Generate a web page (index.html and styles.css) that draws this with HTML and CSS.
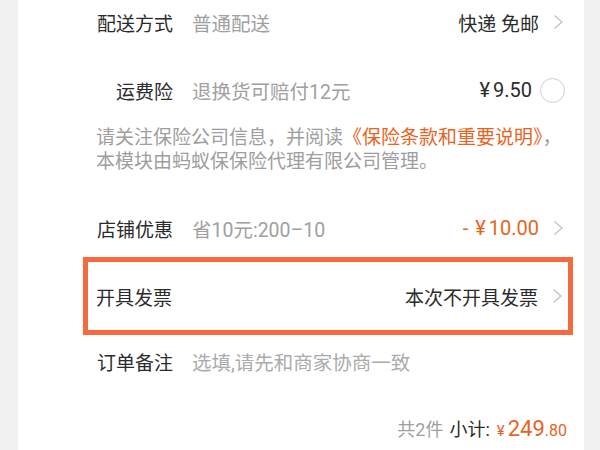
FILE: index.html
```html
<!DOCTYPE html>
<html lang="zh-CN">
<head>
  <meta charset="UTF-8">
  <meta name="viewport" content="width=device-width, initial-scale=1.0">
  <title>确认订单</title>
  <link rel="stylesheet" href="styles.css">
</head>
<body>
  <div class="card">
    <!-- 配送 -->
    <div class="row row-delivery">
      <span class="label">配送方式</span>
      <span class="value">普通配送</span>
      <span class="right">快递 免邮</span>
      <svg class="chevron" width="11" height="16" viewBox="0 0 11 16"><path d="M1.5 1.5 L9 8 L1.5 14.5" fill="none" stroke="#c4c4c4" stroke-width="1.4"/></svg>
    </div>

    <!-- 运费险 -->
    <div class="row row-freight">
      <span class="label">运费险</span>
      <span class="value">退换货可赔付12元</span>
      <span class="right amount"><span class="yen">¥</span>9.50</span>
      <span class="radio"></span>
    </div>

    <p class="note">请关注保险公司信息，并阅读<a class="link" href="#">《保险条款和重要说明》</a>，<br>本模块由蚂蚁保保险代理有限公司管理。</p>

    <!-- 店铺优惠 -->
    <div class="row row-shop">
      <span class="label">店铺优惠</span>
      <span class="value">省10元:200–10</span>
      <span class="right amount price"><span class="minus">-</span><span class="yen">¥</span>10.00</span>
      <svg class="chevron" width="11" height="16" viewBox="0 0 11 16"><path d="M1.5 1.5 L9 8 L1.5 14.5" fill="none" stroke="#c4c4c4" stroke-width="1.4"/></svg>
    </div>

    <!-- 发票 (highlighted) -->
    <div class="highlight">
      <div class="row row-invoice">
        <span class="label">开具发票</span>
        <span class="right">本次不开具发票</span>
        <svg class="chevron" width="11" height="16" viewBox="0 0 11 16"><path d="M1.5 1.5 L9 8 L1.5 14.5" fill="none" stroke="#c4c4c4" stroke-width="1.4"/></svg>
      </div>
    </div>

    <!-- 备注 -->
    <div class="row row-remark">
      <span class="label">订单备注</span>
      <span class="value placeholder">选填,请先和商家协商一致</span>
    </div>

    <div class="row subtotal">
      <span class="count">共2件</span>
      <span class="sub-label">小计:</span>
      <span class="total"><span class="total-yen">¥</span>249<span class="total-dec">.80</span></span>
    </div>
  </div>
</body>
</html>
```

FILE: styles.css
```css
body {
  margin: 0;
  background-color: #f1f1f1;
  font-family: Roboto, "Noto Sans CJK SC", sans-serif;
  color: #2b2b2b;
}
.card {
  margin-left: 18px;
  width: 566px;
  height: 450px;
  box-sizing: border-box;
  padding: 0 19px 0 78px;
  background-color: #fff;
  overflow: hidden;
}
.row {
  display: flex;
  align-items: center;
  height: 44px;
  font-size: 19px;
}
.label {
  width: 77px;
  text-align: right;
  flex-shrink: 0;
  white-space: nowrap;
}
.value {
  margin-left: 19px;
  color: #a0a0a0;
  font-size: 19.5px;
}
.right {
  margin-left: auto;
}
.amount {
  font-size: 20px;
}
.chevron {
  margin-left: 14px;
  margin-right: 1px;
}
.yen {
  margin-right: 3px;
}
.minus {
  margin-right: 7px;
}
.radio {
  width: 23px;
  height: 23px;
  margin-left: 8px;
  border: 1.5px solid #cfcfcf;
  border-radius: 50%;
}
.row-freight {
  margin-top: 24px;
}
.note {
  margin: 14px 0 0;
  font-size: 19px;
  line-height: 24px;
  color: #9e9e9e;
}
.link {
  color: #e8641e;
  text-decoration: none;
}
.row-shop {
  margin-top: 32px;
}
.price {
  color: #e8641e;
}
.highlight {
  margin: 7px -8px 0 -13px;
  padding: 0 4px 0 8px;
  border: 5px solid #f56b3f;
}
.row-invoice {
  height: 68px;
}
.row-invoice .label {
  text-align: left;
}
.row-remark {
  margin-top: 4px;
}
.placeholder {
  color: #ababab;
}
.subtotal {
  margin-top: 23px;
  margin-right: -2px;
  justify-content: flex-end;
}
.count {
  color: #a0a0a0;
  font-size: 18px;
}
.sub-label {
  margin-left: 6px;
  font-size: 18px;
}
.total {
  margin-left: 7px;
  color: #e8641e;
  font-size: 22px;
}
.total-yen {
  font-size: 15px;
  margin-right: 3px;
}
.total-dec {
  font-size: 16px;
}
```
